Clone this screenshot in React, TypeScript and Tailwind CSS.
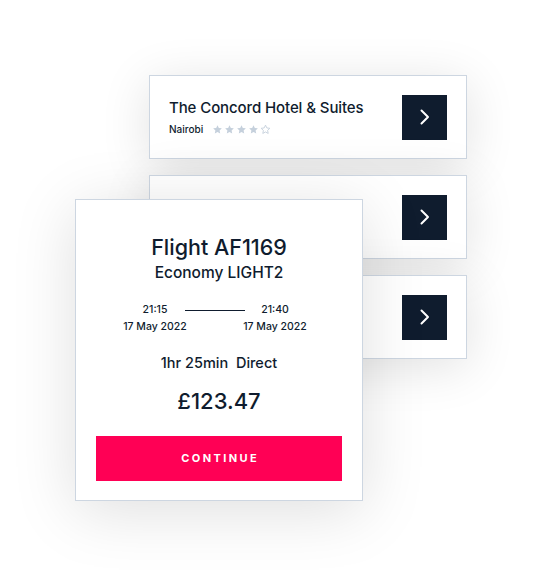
import React from "react";

const font = { fontFamily: "Inter, 'Noto Sans', sans-serif" };

function Star({ filled }: { filled: boolean }) {
  return (
    <svg width="11" height="11" viewBox="0 0 24 24" className="shrink-0">
      <path
        d="M12 2.5l2.9 6.1 6.6.8-4.9 4.6 1.3 6.6L12 17.3l-5.9 3.3 1.3-6.6-4.9-4.6 6.6-.8z"
        fill={filled ? "#c5d0dc" : "none"}
        stroke="#c5d0dc"
        strokeWidth={filled ? 0 : 2}
        strokeLinejoin="round"
      />
    </svg>
  );
}

function Chevron() {
  return (
    <svg width="10" height="16" viewBox="0 0 10 16" fill="none">
      <path d="M1.5 1.5 L8 8 L1.5 14.5" stroke="white" strokeWidth="2" strokeLinecap="round" strokeLinejoin="round" />
    </svg>
  );
}

function ArrowButton() {
  return (
    <div className="w-[45px] h-[45px] bg-[#0f1c2e] flex items-center justify-center shrink-0">
      <Chevron />
    </div>
  );
}

function HotelCard({ children }: { children?: React.ReactNode }) {
  return (
    <div className="w-[318px] h-[84px] bg-white border border-[#cdd6e1] shadow-[0_8px_50px_rgba(0,0,0,0.12)] flex items-center justify-between pl-[19px] pr-[19px]">
      <div className="flex flex-col">{children}</div>
      <ArrowButton />
    </div>
  );
}

export default function App() {
  return (
    <div className="relative w-[542px] h-[577px] bg-white overflow-hidden text-[#0f1c2e]" style={font}>
      <div className="flex flex-col gap-4 pt-[75px] pl-[149px]">
        <HotelCard>
          <div className="text-[15px] leading-[20px] font-medium tracking-[-0.1px]">The Concord Hotel &amp; Suites</div>
          <div className="flex items-center gap-[9px] mt-[4px]">
            <span className="text-[10px] leading-[14px] font-medium">Nairobi</span>
            <div className="flex gap-[1px]">
              <Star filled />
              <Star filled />
              <Star filled />
              <Star filled />
              <Star filled={false} />
            </div>
          </div>
        </HotelCard>
        <HotelCard />
        <HotelCard />
      </div>

      <div className="absolute left-[75px] top-[199px] w-[288px] h-[302px] bg-white border border-[#cdd6e1] shadow-[0_10px_60px_rgba(0,0,0,0.13)] flex flex-col">
        <div className="pt-[35px] flex flex-col items-center">
          <div className="text-[21.5px] leading-[24px] font-medium">Flight AF1169</div>
          <div className="text-[15.5px] leading-[20px] mt-[4px] font-medium">Economy LIGHT2</div>
        </div>
        <div className="flex items-start pl-[49px] mt-[20px]">
          <div className="w-[60px] flex flex-col items-center text-[10.5px] leading-[14px] font-medium">
            <span>21:15</span>
            <span className="mt-[3px] whitespace-nowrap">17 May 2022</span>
          </div>
          <div className="w-[60px] h-px bg-[#0f1c2e] mt-[7px]" />
          <div className="w-[60px] flex flex-col items-center text-[10.5px] leading-[14px] font-medium">
            <span>21:40</span>
            <span className="mt-[3px] whitespace-nowrap">17 May 2022</span>
          </div>
        </div>
        <div className="text-center text-[14.5px] leading-[20px] mt-[19px] font-medium whitespace-pre">1hr 25min  Direct</div>
        <div className="text-center text-[22px] leading-[28px] mt-[14px] font-medium">£123.47</div>
        <div className="mx-[20px] mt-[21px] h-[45px] bg-[#ff0055] flex items-center justify-center">
          <span className="text-white text-[11px] font-bold tracking-[0.22em] pl-[0.22em]">CONTINUE</span>
        </div>
      </div>
    </div>
  );
}
